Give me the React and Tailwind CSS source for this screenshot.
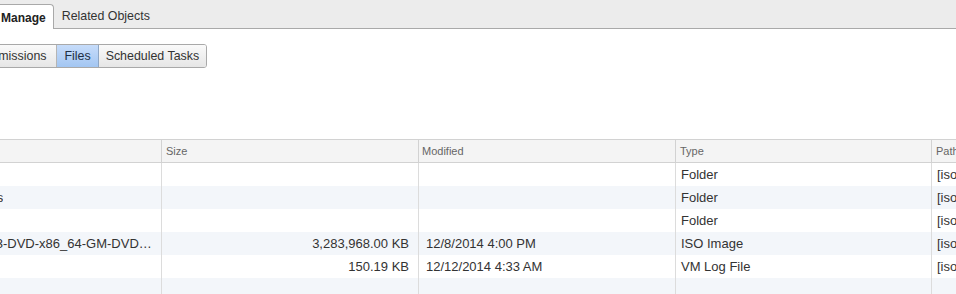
const rows = [
  { name: 'ISO', size: '', modified: '', type: 'Folder', path: '[isoDatastore] ISO' },
  { name: 'ESXi-Patches', size: '', modified: '', type: 'Folder', path: '[isoDatastore] ESXi-Patches' },
  { name: 'vm', size: '', modified: '', type: 'Folder', path: '[isoDatastore] vm' },
  { name: 'SLES-11-SP3-DVD-x86_64-GM-DVD1.iso', size: '3,283,968.00 KB', modified: '12/8/2014 4:00 PM', type: 'ISO Image', path: '[isoDatastore] SLES' },
  { name: 'vmware.log', size: '150.19 KB', modified: '12/12/2014 4:33 AM', type: 'VM Log File', path: '[isoDatastore] vmware.log' },
  { name: '', size: '', modified: '', type: '', path: '' },
]

function Row({ row, i }) {
  return (
    <div className={`flex h-[23px] items-center text-[13px] text-[#333] ${i % 2 ? 'bg-[#f3f6fa]' : 'bg-white'}`}>
      <div className="w-[245px] h-full shrink-0 border-r border-[#dcdcdc] pl-[6px] pr-[3px] flex items-center overflow-hidden">
        <span className="truncate">{row.name}</span>
      </div>
      <div className="w-[257px] h-full shrink-0 border-r border-[#dcdcdc] pr-[9px] flex items-center justify-end">{row.size}</div>
      <div className="w-[257px] h-full shrink-0 border-r border-[#dcdcdc] pl-[7px] flex items-center">{row.modified}</div>
      <div className="w-[256px] h-full shrink-0 border-r border-[#dcdcdc] pl-[5px] flex items-center">{row.type}</div>
      <div className="w-[200px] h-full shrink-0 pl-[5px] flex items-center whitespace-nowrap">{row.path}</div>
    </div>
  )
}

export default function App() {
  return (
    <div className="w-[956px] h-[294px] overflow-hidden bg-white font-['Liberation_Sans',Arial,sans-serif]">
      {/* object tabs */}
      <div className="h-[29px] bg-[#ececec] border-b border-[#a9a9a9] flex items-end text-[12.4px]">
        <div className="-ml-[8px] h-[25px] -mb-px bg-white border border-b-0 border-[#a9a9a9] rounded-t-[4px] pl-[8px] pr-[7px] pt-px flex items-center text-[12px] font-bold text-[#222]">
          Manage
        </div>
        <div className="h-[25px] pl-[8px] pt-px flex items-center text-[#333]">Related Objects</div>
      </div>

      {/* sub tabs */}
      <div className="mt-[15px] flex h-[24px] text-[12.4px] text-[#333]">
        <div className="-ml-[29px] flex rounded-[3px] border border-[#a9a9a9] overflow-hidden">
          <div className="pl-[7px] pr-[10px] flex items-center bg-gradient-to-b from-[#fafafa] to-[#e6e6e6] border-r border-[#b5b5b5]">Permissions</div>
          <div className="px-[7px] flex items-center bg-gradient-to-b from-[#c6dcfa] to-[#a3c6f2] border-r border-[#8ea6c4] text-[#1f2f44]">Files</div>
          <div className="px-[7px] flex items-center bg-gradient-to-b from-[#fafafa] to-[#e6e6e6]">Scheduled Tasks</div>
        </div>
      </div>

      {/* files grid */}
      <div className="mt-[71px] -ml-[83px]">
        <div className="flex h-[24px] items-center bg-[#f4f4f4] border-y border-[#d2d2d2] text-[11px] text-[#666]">
          <div className="w-[245px] h-full shrink-0 border-r border-[#d2d2d2] pl-[6px] flex items-center">Name</div>
          <div className="w-[257px] h-full shrink-0 border-r border-[#d2d2d2] pl-[4px] flex items-center">Size</div>
          <div className="w-[257px] h-full shrink-0 border-r border-[#d2d2d2] pl-[3px] flex items-center">Modified</div>
          <div className="w-[256px] h-full shrink-0 border-r border-[#d2d2d2] pl-[4px] flex items-center">Type</div>
          <div className="w-[200px] h-full shrink-0 pl-[4px] flex items-center">Path</div>
        </div>
        {rows.map((row, i) => (
          <Row key={i} row={row} i={i} />
        ))}
      </div>
    </div>
  )
}
